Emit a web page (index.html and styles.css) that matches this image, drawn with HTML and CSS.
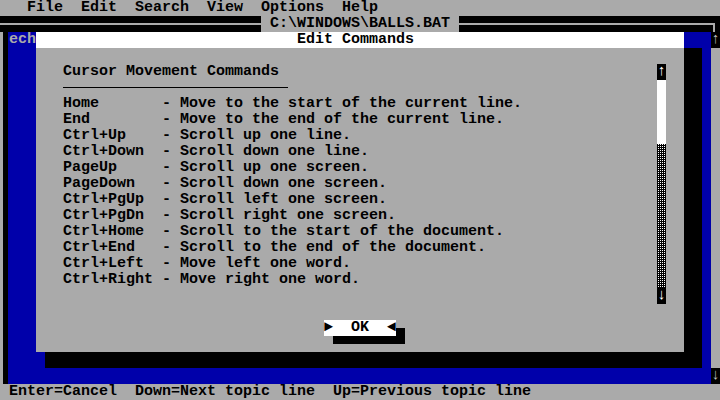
FILE: index.html
```html
<!DOCTYPE html>
<html lang="en">

<head>
    <meta charset="UTF-8">
    <meta name="viewport" content="width=device-width, initial-scale=1.0">
    <title>MS-DOS Editor - BALLS.BAT</title>
    <link rel="stylesheet" href="styles.css">
</head>

<body>

    <div class="screen">
        <div class="menubar">   File  Edit  Search  View  Options  Help</div>

        <div class="window">
            <div class="window-top">
                <div class="top-line left"></div>
                <div class="file-title"> C:\WINDOWS\BALLS.BAT </div>
                <div class="top-line right"></div>
            </div>

            <div class="window-body">
                <div class="left-edge"></div>
                <div class="content">
                    <div class="text-line">ech</div>

                    <!-- dialog sits over the editor text -->
                    <div class="dialog">
                        <div class="dialog-title">Edit Commands</div>
                        <div class="dialog-body">
                            <div class="help">
                                <div class="help-row">Cursor Movement Commands</div>
                                <div class="rule"></div>
                                <div class="cmd"><span class="key">Home</span>- Move to the start of the current line.</div>
                                <div class="cmd"><span class="key">End</span>- Move to the end of the current line.</div>
                                <div class="cmd"><span class="key">Ctrl+Up</span>- Scroll up one line.</div>
                                <div class="cmd"><span class="key">Ctrl+Down</span>- Scroll down one line.</div>
                                <div class="cmd"><span class="key">PageUp</span>- Scroll up one screen.</div>
                                <div class="cmd"><span class="key">PageDown</span>- Scroll down one screen.</div>
                                <div class="cmd"><span class="key">Ctrl+PgUp</span>- Scroll left one screen.</div>
                                <div class="cmd"><span class="key">Ctrl+PgDn</span>- Scroll right one screen.</div>
                                <div class="cmd"><span class="key">Ctrl+Home</span>- Scroll to the start of the document.</div>
                                <div class="cmd"><span class="key">Ctrl+End</span>- Scroll to the end of the document.</div>
                                <div class="cmd"><span class="key">Ctrl+Left</span>- Move left one word.</div>
                                <div class="cmd"><span class="key">Ctrl+Right</span>- Move right one word.</div>
                            </div>
                            <div class="help-scroll">
                                <div class="sb-arrow">↑</div>
                                <div class="sb-thumb"></div>
                                <div class="sb-track"></div>
                                <div class="sb-arrow">↓</div>
                            </div>
                        </div>
                        <div class="buttons">
                            <div class="ok">►  OK  ◄</div>
                        </div>
                    </div>
                </div>
                <div class="vscroll">
                    <div class="arrow">↑</div>
                    <div class="track"></div>
                    <div class="arrow">↓</div>
                </div>
            </div>
        </div>

        <div class="statusbar"> Enter=Cancel  Down=Next topic line  Up=Previous topic line</div>
    </div>

</body>

</html>
```

FILE: styles.css
```css
body {
    margin: 0;
    background: #000;
}

.screen {
    width: 720px;
    height: 400px;
    overflow: hidden;
    background: #aaaaaa;
    color: #000;
    font-family: "Liberation Mono", "DejaVu Sans Mono", monospace;
    font-size: 15px;
    font-weight: bold;
    line-height: 16px;
}

.menubar,
.statusbar {
    height: 16px;
    white-space: pre;
    background: #aaaaaa;
}

/* editor window */
.window {
    height: 368px;
    display: flex;
    flex-direction: column;
}

.window-top {
    height: 16px;
    display: flex;
    background: #000;
}

.top-line {
    height: 9px;
    margin-top: 7px;
    box-sizing: border-box;
    border-top: 2px solid #aaaaaa;
}

.top-line.left {
    width: 261px;
}

.top-line.right {
    flex: 1;
    margin-right: 5px;
    border-right: 2px solid #aaaaaa;
}

.file-title {
    white-space: pre;
    background: #aaaaaa;
    color: #000;
}

.window-body {
    flex: 1;
    display: flex;
}

.left-edge {
    width: 8px;
    box-sizing: border-box;
    border-left: 3px solid #aaaaaa;
    background: #000;
}

.content {
    flex: 1;
    position: relative;
    background: #0000aa;
    color: #aaaaaa;
}

.text-line {
    height: 16px;
    padding-left: 1px;
    white-space: pre;
}

.vscroll {
    width: 9px;
    display: flex;
    flex-direction: column;
    background: #aaaaaa;
}

.arrow {
    height: 16px;
    background: #000;
    color: #bbbbbb;
    text-align: center;
}

.track {
    flex: 1;
}

/* dialog */
.dialog {
    position: absolute;
    left: 28px;
    top: 0;
    width: 648px;
    height: 320px;
    display: flex;
    flex-direction: column;
    background: #aaaaaa;
    color: #000;
    box-shadow: 18px 16px 0 #000, 9px 16px 0 #000;
}

.dialog-title {
    height: 16px;
    padding-left: 29ch;
    white-space: pre;
    background: #fff;
}

.dialog-body {
    display: flex;
    padding: 16px 0 0 3ch;
}

.help {
    width: 66ch;
    height: 240px;
}

.help-row,
.cmd {
    height: 16px;
    white-space: pre;
}

.key {
    display: inline-block;
    width: 11ch;
}

.rule {
    width: 25ch;
    height: 16px;
    background: linear-gradient(#000, #000) 0 7px / 100% 1px no-repeat;
}

.help-scroll {
    width: 9px;
    display: flex;
    flex-direction: column;
}

.sb-arrow {
    height: 16px;
    background: #000;
    color: #fff;
    text-align: center;
}

.sb-thumb {
    height: 64px;
    background: #fff;
}

.sb-track {
    flex: 1;
    background: #000 conic-gradient(#fff 0 25%, transparent 0) 0 0 / 2px 2px;
}

.buttons {
    display: flex;
    justify-content: center;
    margin-top: 16px;
}

.ok {
    width: 8ch;
    height: 16px;
    white-space: pre;
    background: #fff;
    box-shadow: 9px 8px 0 #000;
}
```
